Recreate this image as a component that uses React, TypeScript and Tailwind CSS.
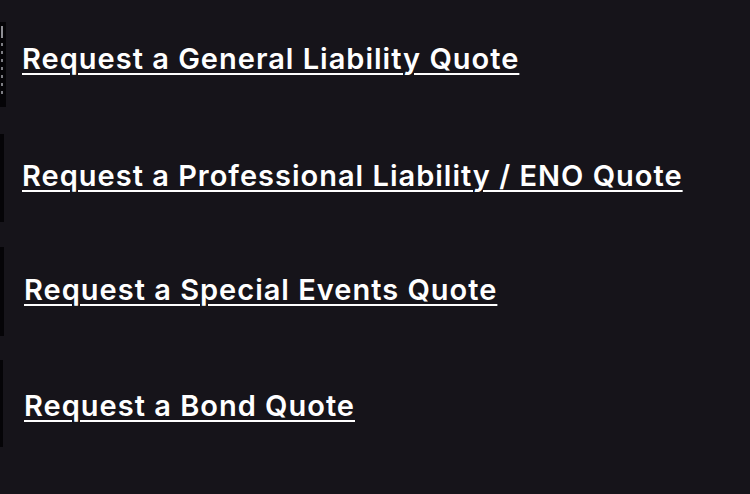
const rows = [
  { label: "Request a General Liability Quote", row: "mt-[22px]", bar: "w-[6px] h-[85px]", pad: "pl-4 -mt-3", mark: true },
  { label: "Request a Professional Liability / ENO Quote", row: "mt-[27px]", bar: "w-[4px] h-[88px]", pad: "pl-[18px] -mt-1", mark: false },
  { label: "Request a Special Events Quote", row: "mt-[25px]", bar: "w-[4px] h-[89px]", pad: "pl-5 -mt-1", mark: false },
  { label: "Request a Bond Quote", row: "mt-[24px]", bar: "w-[3px] h-[87px]", pad: "pl-[21px] mt-1", mark: false },
];

export default function App() {
  return (
    <div className="w-[750px] h-[494px] bg-[#16141a] overflow-hidden flex flex-col">
      {rows.map((r) => (
        <div key={r.label} className={`${r.row} flex items-center`}>
          <div className={`${r.bar} bg-[#050407] shrink-0 flex flex-col items-start gap-[5px] pt-[4px] pl-px`}>
            {r.mark && (
              <>
                <span className="block w-[2px] h-[12px] bg-[#8e8e94]" />
                {[0, 1, 2, 3, 4, 5, 6].map((i) => (
                  <span key={i} className="block w-[2px] h-[3px] bg-[#7c7c82]" />
                ))}
              </>
            )}
          </div>
          <a
            href="#"
            className={`${r.pad} text-white text-[29px] font-semibold tracking-[1px] underline decoration-2 underline-offset-[4px] [font-family:Inter,'Noto_Sans',sans-serif]`}
          >
            {r.label}
          </a>
        </div>
      ))}
    </div>
  );
}
